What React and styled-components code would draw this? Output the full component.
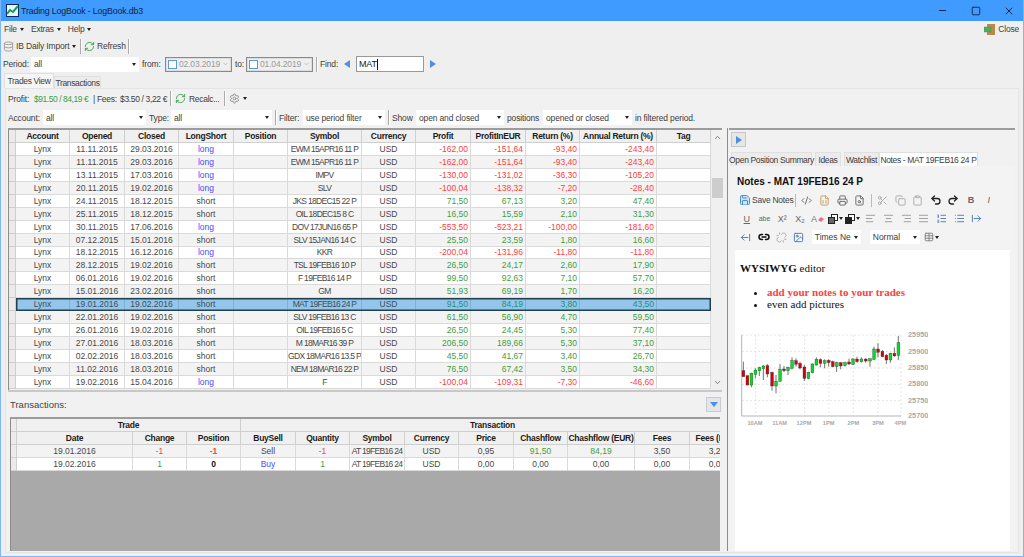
import React from "react";
import styled, { createGlobalStyle } from "styled-components";
import {
  Database, RefreshCw, Settings, Save, CodeXml, FileSpreadsheet, Printer, FileSearch, Scissors, Copy,
  Clipboard, Undo2, Redo2, AlignLeft, AlignCenter, AlignRight, AlignJustify, ListOrdered, List,
  Link2, Unlink, Image, Table, ChevronDown, ChevronUp, Minus, Square, X, ArrowRightFromLine, ArrowLeftFromLine,
} from "lucide-react";

const TRADE_COLS = "7px 54px 55px 54px 55px 54px 74px 54px 55px 55px 54px 77px 54px";
const TX_COLS = "6px 116px 54px 54px 55px 54px 55px 54px 55px 54px 67px 55px 55px";

const RED = "#ff4040";
const GREEN = "#3e9e3e";
const BLUE = "#4a4aff";

const trades = [
  ["11.11.2015", "29.03.2016", "long", "EWM 15APR16 11 P", "-162,00", "-151,64", "-93,40", "-243,40"],
  ["11.11.2015", "29.03.2016", "long", "EWM 15APR16 11 P", "-162,00", "-151,64", "-93,40", "-243,40"],
  ["13.11.2015", "17.03.2016", "long", "IMPV", "-130,00", "-131,02", "-36,30", "-105,20"],
  ["20.11.2015", "19.02.2016", "long", "SLV", "-100,04", "-138,32", "-7,20", "-28,40"],
  ["24.11.2015", "18.12.2015", "short", "JKS 18DEC15 22 P", "71,50", "67,13", "3,20", "47,40"],
  ["25.11.2015", "18.12.2015", "short", "OIL 18DEC15 8 C", "16,50", "15,59", "2,10", "31,30"],
  ["30.11.2015", "17.06.2016", "long", "DOV 17JUN16 65 P", "-553,50", "-523,21", "-100,00", "-181,60"],
  ["07.12.2015", "15.01.2016", "short", "SLV 15JAN16 14 C", "25,50", "23,59", "1,80", "16,60"],
  ["18.12.2015", "16.12.2016", "long", "KKR", "-200,04", "-131,96", "-11,80", "-11,80"],
  ["28.12.2015", "19.02.2016", "short", "TSL 19FEB16 10 P", "26,50", "24,17", "2,60", "17,90"],
  ["06.01.2016", "19.02.2016", "short", "F 19FEB16 14 P", "99,50", "92,63", "7,10", "57,70"],
  ["15.01.2016", "23.02.2016", "short", "GM", "51,93", "69,19", "1,70", "16,20"],
  ["19.01.2016", "19.02.2016", "short", "MAT 19FEB16 24 P", "91,50", "84,19", "3,80", "43,50"],
  ["22.01.2016", "19.02.2016", "short", "SLV 19FEB16 13 C", "61,50", "56,90", "4,70", "59,50"],
  ["26.01.2016", "19.02.2016", "short", "OIL 19FEB16 5 C", "26,50", "24,45", "5,30", "77,40"],
  ["27.01.2016", "18.03.2016", "short", "M 18MAR16 39 P", "206,50", "189,66", "5,30", "37,10"],
  ["02.02.2016", "18.03.2016", "short", "GDX 18MAR16 13.5 P", "45,50", "41,67", "3,40", "26,70"],
  ["11.02.2016", "18.03.2016", "short", "NEM 18MAR16 22 P", "76,50", "67,42", "3,50", "34,30"],
  ["19.02.2016", "15.04.2016", "long", "F", "-100,04", "-109,31", "-7,30", "-46,60"],
];

// x, bodyTop, bodyBottom, wickTop, wickBottom, up
const candles = [
  [40, 362, 380, 335, 380, 0], [52, 377, 405, 377, 406, 0], [64, 370, 405, 368, 412, 1], [76, 360, 373, 355, 385, 1],
  [88, 353, 362, 350, 378, 1], [100, 348, 356, 345, 390, 1], [112, 347, 372, 342, 382, 0], [126, 367, 408, 365, 422, 0],
  [138, 394, 408, 375, 430, 1], [150, 358, 394, 343, 395, 1], [162, 357, 362, 348, 366, 0], [174, 352, 362, 350, 375, 1],
  [186, 332, 355, 322, 358, 1], [198, 332, 343, 325, 350, 0], [210, 340, 354, 335, 358, 0], [223, 351, 385, 345, 393, 0],
  [235, 367, 385, 365, 388, 1], [247, 342, 368, 340, 370, 1], [259, 328, 345, 322, 347, 1], [271, 329, 340, 325, 352, 0],
  [284, 332, 340, 328, 355, 1], [296, 331, 338, 328, 350, 0], [308, 335, 350, 332, 352, 0], [320, 338, 350, 335, 366, 1],
  [332, 338, 348, 336, 358, 0], [345, 338, 347, 335, 350, 1], [357, 336, 342, 326, 345, 0], [369, 327, 343, 324, 345, 1],
  [381, 327, 335, 320, 338, 0], [394, 327, 335, 322, 338, 1], [407, 327, 333, 325, 338, 0], [420, 326, 333, 325, 350, 1],
  [432, 297, 328, 290, 330, 1], [444, 297, 307, 280, 322, 0], [457, 304, 320, 300, 322, 0], [469, 316, 330, 312, 342, 0],
  [481, 310, 330, 308, 338, 1], [493, 310, 318, 292, 320, 0], [505, 278, 316, 258, 330, 1],
];

const GlobalStyle = createGlobalStyle`
  html, body { margin: 0; padding: 0; background: #efefef; }
  body { font-family: "Liberation Sans", Arial, sans-serif; font-size: 8.5px; color: #404040; }
  * { box-sizing: border-box; }
`;

const Win = styled.div`
  width: 1024px;
  height: 557px;
  display: flex;
  flex-direction: column;
  background: #efefef;
  border: 1px solid #7db8f8;
  border-top: 0;
  overflow: hidden;
`;

const TitleBar = styled.div`
  height: 21px;
  margin: 0 -1px;
  flex: none;
  background: #3f9bff;
  color: #10243c;
  font-size: 8.8px;
  letter-spacing: -0.15px;
  display: flex;
  align-items: center;
  padding-left: 6px;
  gap: 2px;
`;

const TitleText = styled.span`
  flex: 1;
`;

const WinButton = styled.div`
  width: 31px;
  height: 21px;
  display: flex;
  align-items: center;
  justify-content: center;
  color: #0c2138;
`;

const MenuBar = styled.div`
  height: 16px;
  flex: none;
  display: flex;
  align-items: center;
  padding: 0 3px;
  gap: 7px;
  letter-spacing: -0.2px;
`;

const MenuItem = styled.span`
  display: flex;
  align-items: center;
  gap: 3px;
`;

const Caret = styled.span`
  width: 0;
  height: 0;
  flex: none;
  margin: ${(p) => p.$margin || 0};
  border-left: 2.5px solid transparent;
  border-right: 2.5px solid transparent;
  border-top: 3px solid #222;
`;

const CloseButton = styled.span`
  margin-left: auto;
  display: flex;
  align-items: center;
  gap: 2px;
  padding-right: 1px;
`;

const ToolRow = styled.div`
  height: ${(p) => p.$h || 18}px;
  flex: none;
  display: flex;
  align-items: center;
  gap: ${(p) => p.$gap || 3}px;
  padding-left: ${(p) => p.$pad ?? 2}px;
  letter-spacing: -0.15px;
`;

const Label = styled.span`
  width: ${(p) => p.$w}px;
  flex: none;
  margin-left: ${(p) => p.$ml || 0}px;
  color: ${(p) => p.$color || "inherit"};
  letter-spacing: ${(p) => p.$track ?? -0.15}px;
  white-space: nowrap;
`;

const ToolSep = styled.div`
  width: 1px;
  height: 15px;
  flex: none;
  margin: ${(p) => p.$margin || "0 2px"};
  background: #aaa;
  box-shadow: 1px 0 0 #fff;
`;

const Select = styled.div`
  width: ${(p) => p.$w}px;
  height: 15px;
  flex: none;
  background: #fff;
  display: flex;
  align-items: center;
  justify-content: space-between;
  padding: 0 3px 0 3px;
`;

const DateField = styled.div`
  width: 67px;
  height: 15px;
  flex: none;
  border: 1px solid #8a8a8a;
  box-shadow: inset 0 0 0 1px #ddd;
  display: flex;
  align-items: center;
  background: #efefef;
  color: #9a9a9a;
  padding: 0 2px;
  gap: 2px;
`;

const CheckBox = styled.span`
  width: 9px;
  height: 9px;
  flex: none;
  border: 1px solid #5a9ad8;
  background: #fff;
`;

const DateText = styled.span`
  flex: 1;
`;

const FindInput = styled.div`
  width: 68px;
  height: 16px;
  flex: none;
  border: 1px solid #999;
  background: #fff;
  font-size: 9px;
  color: #222;
  display: flex;
  align-items: center;
  padding-left: 2px;
`;

const TextCursor = styled.span`
  width: 1px;
  height: 11px;
  background: #111;
`;

const Arrow = styled.span`
  width: 0;
  height: 0;
  flex: none;
  margin: ${(p) => p.$margin || 0};
  border-top: 4px solid transparent;
  border-bottom: 4px solid transparent;
  ${(p) => (p.$left ? "border-right" : "border-left")}: 6px solid #4f8fdc;
`;

const Tabs = styled.div`
  height: ${(p) => p.$h}px;
  flex: none;
  display: flex;
  align-items: flex-end;
  padding-left: ${(p) => p.$pad}px;
  gap: ${(p) => p.$gap || 0}px;
`;

const Tab = styled.div`
  width: ${(p) => p.$w}px;
  height: ${(p) => p.$tall || (p.$active ? 15 : 12)}px;
  flex: none;
  margin-left: ${(p) => p.$ml || 0}px;
  display: flex;
  align-items: center;
  justify-content: center;
  white-space: nowrap;
  letter-spacing: -0.35px;
  background: ${(p) => (p.$active ? p.$activeBg || "#f5f5f5" : "#ececec")};
  border: 1px solid #e0e0e0;
  border-bottom: 0;
`;

const Panel = styled.div`
  flex: 1;
  min-height: 0;
  margin: 0 4px 3px 4px;
  background: #f1f1f1;
  border: 1px solid #e4e4e4;
  display: flex;
  flex-direction: column;
`;

const Split = styled.div`
  flex: 1;
  min-height: 0;
  display: flex;
  padding: 1px 0 1px 2px;
`;

const LeftCol = styled.div`
  width: 714px;
  flex: none;
  display: flex;
  flex-direction: column;
`;

const TableBox = styled.div`
  height: 262px;
  flex: none;
  border-top: 2px solid #9c9c9c;
  border-left: 1px solid #8c8c8c;
  display: flex;
  background: #efefef;
`;

const TableBody = styled.div`
  width: 702px;
  flex: none;
`;

const Row = styled.div`
  display: grid;
  grid-template-columns: ${(p) => p.$cols};
  height: ${(p) => p.$h || 13}px;
  position: relative;
  background: ${(p) => (p.$alt ? "#f3f3f3" : "#fff")};
`;

const SelectedRow = styled(Row)`
  background: #94c5ea;
  &::after {
    content: "";
    position: absolute;
    inset: 0 0 0 7px;
    border: 1px solid #23404f;
    box-shadow: inset 0 0 0 0.5px #23404f;
  }
`;

const Cell = styled.div`
  display: flex;
  align-items: center;
  justify-content: ${(p) => (p.$right ? "flex-end" : "center")};
  padding-right: ${(p) => (p.$right ? 2 : 0)}px;
  border-right: 1px solid ${(p) => (p.$sel ? "#7fb0d6" : "#dadada")};
  border-bottom: 1px solid ${(p) => (p.$sel ? "#7fb0d6" : "#dadada")};
  color: ${(p) => p.$color || (p.$sel ? "#3a5060" : "#484848")};
  font-weight: ${(p) => (p.$bold ? 700 : 400)};
  letter-spacing: ${(p) => (p.$tight ? -0.7 : 0)}px;
  white-space: nowrap;
  overflow: hidden;
`;

const HeadCell = styled.div`
  display: flex;
  align-items: center;
  justify-content: center;
  background: #f0f0f0;
  border-right: 1px solid #cfcfcf;
  border-bottom: 1px solid #cfcfcf;
  font-weight: 700;
  color: #1c1c1c;
  letter-spacing: -0.25px;
  white-space: nowrap;
  overflow: hidden;
`;

const RowHead = styled.div`
  background: #ebebeb;
  border-right: 1px solid #cfcfcf;
  border-bottom: 1px solid #cfcfcf;
`;

const ScrollBar = styled.div`
  width: 11px;
  flex: none;
  margin-left: 1px;
  background: #f0f0f0;
  display: flex;
  flex-direction: column;
  align-items: center;
  justify-content: space-between;
  position: relative;
  padding: 3px 0;
  color: #555;
`;

const ScrollThumb = styled.div`
  position: absolute;
  top: 48px;
  left: 0;
  width: 100%;
  height: 20px;
  background: #cdcdcd;
`;

const TxHeader = styled.div`
  height: 27px;
  flex: none;
  display: flex;
  align-items: center;
  justify-content: space-between;
  border-top: 2px solid #c8c8c8;
  font-size: 9.5px;
  color: #444;
  padding: 0 1px 0 2px;
`;

const FilterButton = styled.div`
  width: 15px;
  height: 15px;
  background: #e2e6ea;
  border: 1px solid #c8ccd0;
  display: flex;
  align-items: center;
  justify-content: center;
`;

const FilterTriangle = styled.span`
  width: 0;
  height: 0;
  border-left: 4.5px solid transparent;
  border-right: 4.5px solid transparent;
  border-top: 5px solid #4f8fdc;
`;

const TxBox = styled.div`
  flex: 1;
  min-height: 0;
  margin: 0 2px 0 2px;
  background: #a9a9a9;
  border-top: 2px solid #9c9c9c;
  border-left: 1px solid #8c8c8c;
  overflow: hidden;
`;

const GroupRow = styled.div`
  display: grid;
  grid-template-columns: 6px 224px 504px;
  height: 13px;
`;

const TxInner = styled.div`
  width: 740px;
`;

const RightCol = styled.div`
  flex: 1;
  min-width: 0;
  margin-left: 5px;
  padding-left: 1px;
  border-left: 1px solid #8c8c8c;
  display: flex;
  flex-direction: column;
`;

const RightPane = styled.div`
  flex: 1;
  min-height: 0;
  margin-right: 3px;
  border-top: 2px solid #9c9c9c;
  display: flex;
  flex-direction: column;
`;

const PaneButton = styled.div`
  width: 15px;
  height: 15px;
  flex: none;
  margin: 2px 0 0 2px;
  background: #e6e6e6;
  border: 1px solid #c8c8c8;
  display: flex;
  align-items: center;
  justify-content: center;
`;

const NotesBody = styled.div`
  flex: 1;
  min-height: 0;
  background: #f3f3f3;
  margin-left: 1px;
  padding: 0 5px;
  display: flex;
  flex-direction: column;
`;

const NotesTitle = styled.div`
  height: 25px;
  flex: none;
  display: flex;
  align-items: center;
  padding: 6px 0 0 2px;
  font-size: 10px;
  font-weight: 700;
  color: #111;
  white-space: nowrap;
`;

const EditorRow = styled.div`
  height: 18.5px;
  flex: none;
  display: flex;
  align-items: center;
  padding-left: ${(p) => p.$pad || 0}px;
`;

const EditorIcon = styled.div`
  width: ${(p) => p.$w || 17.7}px;
  height: 14px;
  flex: none;
  display: flex;
  align-items: center;
  justify-content: center;
  gap: 1px;
  color: ${(p) => p.$color || "#666"};
  font-size: ${(p) => p.$size || 9}px;
  font-weight: ${(p) => (p.$bold ? 700 : 400)};
  font-style: ${(p) => (p.$italic ? "italic" : "normal")};
  text-decoration: ${(p) => (p.$under ? "underline" : "none")};
  white-space: nowrap;
`;

const SaveLabel = styled.span`
  width: 41px;
  flex: none;
  color: #444;
  margin-left: 1px;
  letter-spacing: -0.25px;
  white-space: nowrap;
`;

const EditorSep = styled.div`
  width: 1px;
  height: 13px;
  flex: none;
  margin: 0 2px;
  background: #bbb;
`;

const EditorSelect = styled(Select)`
  height: 14px;
  margin: ${(p) => p.$margin || 0};
`;

const Editor = styled.div`
  flex: 1;
  min-height: 0;
  margin-top: 3px;
  background: #fff;
  color: #111;
  font-family: "Liberation Serif", "Times New Roman", serif;
  font-size: 11px;
  padding: 12px 5px 0;
  overflow: hidden;
`;

const EditorLine = styled.p`
  margin: 0;
  line-height: 13px;
`;

const Bullets = styled.ul`
  margin: 11px 0 0;
  padding-left: 27px;
  line-height: 12.5px;
`;

const RedNote = styled.li`
  color: ${RED};
  font-weight: 700;
  &::marker {
    color: #111;
  }
`;

const ChartSvg = styled.svg`
  display: block;
  margin: 21px 0 0 -2px;
`;

function TradeRow({ t, index }) {
  const sel = index === 12;
  const RowKind = sel ? SelectedRow : Row;
  const negative = t[4].startsWith("-");
  const money = sel ? "#1f8f7e" : negative ? RED : GREEN;
  const side = t[2] === "long" ? BLUE : undefined;
  return (
    <RowKind $cols={TRADE_COLS} $alt={index % 2 === 1} $h={12.95}>
      <RowHead />
      <Cell $sel={sel}>Lynx</Cell>
      <Cell $sel={sel}>{t[0]}</Cell>
      <Cell $sel={sel}>{t[1]}</Cell>
      <Cell $sel={sel} $color={side}>{t[2]}</Cell>
      <Cell $sel={sel} />
      <Cell $sel={sel} $tight>{t[3]}</Cell>
      <Cell $sel={sel}>USD</Cell>
      <Cell $sel={sel} $right $color={money}>{t[4]}</Cell>
      <Cell $sel={sel} $right $color={money}>{t[5]}</Cell>
      <Cell $sel={sel} $right $color={money}>{t[6]}</Cell>
      <Cell $sel={sel} $right $color={money}>{t[7]}</Cell>
      <Cell $sel={sel} />
    </RowKind>
  );
}

function CandleChart() {
  const grid = [255, 304, 354, 403, 452];
  const vgrid = [77, 150, 224, 297, 370, 444, 513];
  const prices = [["25950", 255], ["25900", 304], ["25850", 353], ["25800", 402], ["25750", 451], ["25700", 498]];
  const hours = [["10AM", 75], ["11AM", 149], ["12PM", 222], ["1PM", 296], ["2PM", 370], ["3PM", 444], ["4PM", 511]];
  return (
    <ChartSvg width="190" height="100" viewBox="24 246 570 300">
      {grid.map((y) => (
        <line key={y} x1="36" x2="513" y1={y} y2={y} stroke="#d8d8d8" strokeWidth="2" strokeDasharray="6 6" />
      ))}
      {vgrid.map((x) => (
        <line key={x} x1={x} x2={x} y1="255" y2="497" stroke="#d8d8d8" strokeWidth="2" strokeDasharray="6 6" />
      ))}
      <path d="M35 255V498H513" fill="none" stroke="#b5b5b5" strokeWidth="3" />
      {candles.map(([x, top, bottom, wt, wb, up]) => (
        <g key={x}>
          <line x1={x} x2={x} y1={wt} y2={wb} stroke="#555" strokeWidth="2.5" />
          <rect x={x - 4} y={top} width="8.5" height={bottom - top} fill={up ? "#00e020" : "#d80010"} stroke="#333" strokeWidth="1" />
        </g>
      ))}
      {prices.map(([p, y]) => (
        <text key={p} x="534" y={y + 7} fontSize="22" fill="#a8a8a8" fontFamily="Liberation Sans" fontWeight="700">{p}</text>
      ))}
      {hours.map(([h, x]) => (
        <text key={h} x={x} y="524" fontSize="17" fill="#a8a8a8" textAnchor="middle" fontFamily="Liberation Sans" fontWeight="700">{h}</text>
      ))}
    </ChartSvg>
  );
}

function AppLogo() {
  return (
    <svg width="13" height="13" viewBox="0 0 13 13">
      <rect width="13" height="13" fill="#0a2a5a" />
      <rect x="1" y="1" width="11" height="11" fill="#e8f4ff" />
      <path d="M1 10L4 6l3 2 5-6" fill="none" stroke="#12a050" strokeWidth="2" />
    </svg>
  );
}

function DoorIcon() {
  return (
    <svg width="12" height="11" viewBox="0 0 12 11">
      <rect x="3" y="0" width="8" height="11" fill="#b98a4c" />
      <rect x="0" y="3" width="7" height="5" fill="#4caf50" stroke="#777" strokeWidth="0.5" />
    </svg>
  );
}

// the two overlapping squares of the text and background colour buttons
function ColorSquares({ fill }) {
  return (
    <svg width="10" height="10" viewBox="0 0 10 10">
      <rect x="3.5" y="0.5" width="6" height="6" fill="#fff" stroke="#222" />
      <rect x="0.5" y="3.5" width="6" height="6" fill={fill} stroke="#222" />
    </svg>
  );
}

function EraserA() {
  return (
    <svg width="6" height="6" viewBox="0 0 6 6">
      <path d="M0 4L3 1l3 2-3 3z" fill="#f06a8a" />
    </svg>
  );
}

export default function App() {
  return (
    <>
      <GlobalStyle />
      <Win>
        <TitleBar>
          <AppLogo />
          <TitleText>Trading LogBook - LogBook.db3</TitleText>
          <WinButton><Minus size={11} /></WinButton>
          <WinButton><Square size={10} /></WinButton>
          <WinButton><X size={12} /></WinButton>
        </TitleBar>

        <MenuBar>
          <MenuItem>File <Caret /></MenuItem>
          <MenuItem>Extras <Caret /></MenuItem>
          <MenuItem>Help <Caret /></MenuItem>
          <CloseButton><DoorIcon />Close</CloseButton>
        </MenuBar>

        <ToolRow $gap={2}>
          <Database size={11} color="#9a9a9a" />
          <Label $w={53}>IB Daily Import</Label>
          <Caret $margin="0 0 0 1px" />
          <ToolSep $margin="0 1px 0 2px" />
          <RefreshCw size={11} color="#3f9f4f" />
          <Label $w={26}>Refresh</Label>
          <ToolSep $margin="0 0 0 3px" />
        </ToolRow>

        <ToolRow $gap={3}>
          <Label $w={25}>Period:</Label>
          <Select $w={108}>all<Caret /></Select>
          <Label $w={20}>from:</Label>
          <DateField><CheckBox /><DateText>02.03.2019</DateText><ChevronDown size={8} /></DateField>
          <Label $w={8}>to:</Label>
          <DateField><CheckBox /><DateText>01.04.2019</DateText><ChevronDown size={8} /></DateField>
          <ToolSep $margin="0" />
          <Label $w={17}>Find:</Label>
          <Arrow $left $margin="0 3px 0 4px" />
          <FindInput>MAT<TextCursor /></FindInput>
          <Arrow $margin="0 0 0 3px" />
        </ToolRow>

        <Tabs $h={15} $pad={3}>
          <Tab $w={50} $active>Trades View</Tab>
          <Tab $w={47}>Transactions</Tab>
        </Tabs>

        <Panel>
          <ToolRow $h={19} $pad={2}>
            <Label $w={21}>Profit:</Label>
            <Label $w={54} $ml={2} $color={GREEN} $track={-0.45}>$91.50 / 84,19 €</Label>
            <Label $w={22} $ml={2} $track={-0.3}>| Fees:</Label>
            <Label $w={46} $ml={2} $track={-0.35}>$3.50 / 3,22 €</Label>
            <ToolSep $margin="0 1px" />
            <RefreshCw size={11} color="#3f9f4f" />
            <Label $w={30} $track={-0.3}>Recalc...</Label>
            <ToolSep $margin="0 1px 0 2px" />
            <Settings size={11} color="#8a8a8a" />
            <Caret />
          </ToolRow>
          <ToolRow $h={19} $pad={2}>
            <Label $w={32}>Account:</Label>
            <Select $w={103}>all<Caret /></Select>
            <Label $w={19}>Type:</Label>
            <Select $w={101}>all<Caret /></Select>
            <ToolSep $margin="0" />
            <Label $w={21}>Filter:</Label>
            <Select $w={82}>use period filter<Caret /></Select>
            <ToolSep $margin="0" />
            <Label $w={21}>Show</Label>
            <Select $w={88}>open and closed<Caret /></Select>
            <Label $w={33}>positions</Label>
            <Select $w={89}>opened or closed<Caret /></Select>
            <span>in filtered period.</span>
          </ToolRow>

          <Split>
            <LeftCol>
              <TableBox>
                <TableBody>
                  <Row $cols={TRADE_COLS}>
                    <RowHead />
                    {["Account", "Opened", "Closed", "LongShort", "Position", "Symbol", "Currency", "Profit", "ProfitInEUR", "Return (%)", "Annual Return (%)", "Tag"].map((h) => (
                      <HeadCell key={h}>{h}</HeadCell>
                    ))}
                  </Row>
                  {trades.map((t, i) => <TradeRow key={i} t={t} index={i} />)}
                </TableBody>
                <ScrollBar>
                  <ChevronUp size={9} />
                  <ScrollThumb />
                  <ChevronDown size={9} />
                </ScrollBar>
              </TableBox>

              <TxHeader>
                <span>Transactions:</span>
                <FilterButton><FilterTriangle /></FilterButton>
              </TxHeader>

              <TxBox>
                <TxInner>
                  <GroupRow>
                    <RowHead />
                    <HeadCell>Trade</HeadCell>
                    <HeadCell>Transaction</HeadCell>
                  </GroupRow>
                  <Row $cols={TX_COLS}>
                    <RowHead />
                    {["Date", "Change", "Position", "BuySell", "Quantity", "Symbol", "Currency", "Price", "Chashflow", "Chashflow (EUR)", "Fees", "Fees (EUR)"].map((h) => (
                      <HeadCell key={h}>{h}</HeadCell>
                    ))}
                  </Row>
                  <Row $cols={TX_COLS} $alt>
                    <RowHead />
                    <Cell>19.01.2016</Cell>
                    <Cell $color={RED}>-1</Cell>
                    <Cell $color={RED} $bold>-1</Cell>
                    <Cell>Sell</Cell>
                    <Cell $color={RED}>-1</Cell>
                    <Cell $tight>AT 19FEB16 24</Cell>
                    <Cell>USD</Cell>
                    <Cell>0,95</Cell>
                    <Cell $color={GREEN}>91,50</Cell>
                    <Cell $color={GREEN}>84,19</Cell>
                    <Cell>3,50</Cell>
                    <Cell>3,22</Cell>
                  </Row>
                  <Row $cols={TX_COLS}>
                    <RowHead />
                    <Cell>19.02.2016</Cell>
                    <Cell $color={GREEN}>1</Cell>
                    <Cell $color="#111" $bold>0</Cell>
                    <Cell $color={BLUE}>Buy</Cell>
                    <Cell $color={GREEN}>1</Cell>
                    <Cell $tight>AT 19FEB16 24</Cell>
                    <Cell>USD</Cell>
                    <Cell>0,00</Cell>
                    <Cell>0,00</Cell>
                    <Cell>0,00</Cell>
                    <Cell>0,00</Cell>
                    <Cell>0,00</Cell>
                  </Row>
                </TxInner>
              </TxBox>
            </LeftCol>

            <RightCol>
              <RightPane>
                <PaneButton><Arrow /></PaneButton>
                <Tabs $h={19} $pad={2} $gap={3}>
                  <Tab $w={81} $tall={14}>Open Position Summary</Tab>
                  <Tab $w={26} $tall={14}>Ideas</Tab>
                  <Tab $w={35} $tall={14}>Watchlist</Tab>
                  <Tab $w={99} $tall={14} $ml={-3} $active $activeBg="#fff">Notes - MAT 19FEB16 24 P</Tab>
                </Tabs>
                <NotesBody>
                  <NotesTitle>Notes - MAT 19FEB16 24 P</NotesTitle>
                  <EditorRow $pad={4}>
                    <Save size={12} color="#4a8fd0" fill="#cfe3f7" />
                    <SaveLabel>Save Notes</SaveLabel>
                    <EditorSep />
                    <EditorIcon><CodeXml size={11} /></EditorIcon>
                    <EditorIcon><FileSpreadsheet size={11} color="#c99a5a" /></EditorIcon>
                    <EditorIcon><Printer size={11} /></EditorIcon>
                    <EditorIcon><FileSearch size={11} /></EditorIcon>
                    <EditorSep />
                    <EditorIcon $color="#aaa"><Scissors size={11} /></EditorIcon>
                    <EditorIcon $color="#aaa"><Copy size={11} /></EditorIcon>
                    <EditorIcon $color="#aaa"><Clipboard size={11} /></EditorIcon>
                    <EditorIcon $color="#222"><Undo2 size={12} strokeWidth={2.6} /></EditorIcon>
                    <EditorIcon $color="#222"><Redo2 size={12} strokeWidth={2.6} /></EditorIcon>
                    <EditorIcon $bold>B</EditorIcon>
                    <EditorIcon $italic>I</EditorIcon>
                  </EditorRow>
                  <EditorRow $pad={3}>
                    <EditorIcon $under>U</EditorIcon>
                    <EditorIcon $size={7}>abe</EditorIcon>
                    <EditorIcon>X²</EditorIcon>
                    <EditorIcon>X₂</EditorIcon>
                    <EditorIcon $color="#777">A<EraserA /></EditorIcon>
                    <EditorIcon><ColorSquares fill="#666" /><Caret /></EditorIcon>
                    <EditorIcon><ColorSquares fill="#222" /><Caret /></EditorIcon>
                    <EditorIcon $color="#999"><AlignLeft size={11} /></EditorIcon>
                    <EditorIcon $color="#999"><AlignCenter size={11} /></EditorIcon>
                    <EditorIcon $color="#999"><AlignRight size={11} /></EditorIcon>
                    <EditorIcon $color="#999"><AlignJustify size={11} /></EditorIcon>
                    <EditorIcon $color="#4a78b0"><ListOrdered size={11} /></EditorIcon>
                    <EditorIcon $color="#4a78b0"><List size={11} /></EditorIcon>
                    <EditorIcon $color="#4a78b0"><ArrowRightFromLine size={11} /></EditorIcon>
                  </EditorRow>
                  <EditorRow $pad={2}>
                    <EditorIcon $color="#4a78b0"><ArrowLeftFromLine size={11} /></EditorIcon>
                    <EditorIcon $color="#111"><Link2 size={12} strokeWidth={3} /></EditorIcon>
                    <EditorIcon $color="#aaa"><Unlink size={11} /></EditorIcon>
                    <EditorIcon $color="#4a78b0"><Image size={11} /></EditorIcon>
                    <EditorSelect $w={49} $margin="0 0 0 4px">Times Ne<Caret /></EditorSelect>
                    <EditorSelect $w={50} $margin="0 0 0 9px">Normal<Caret /></EditorSelect>
                    <EditorIcon $w={24} $color="#777"><Table size={10} /><Caret /></EditorIcon>
                  </EditorRow>
                  <Editor>
                    <EditorLine><b>WYSIWYG</b> editor</EditorLine>
                    <Bullets>
                      <RedNote>add your notes to your trades</RedNote>
                      <li>even add pictures</li>
                    </Bullets>
                    <CandleChart />
                  </Editor>
                </NotesBody>
              </RightPane>
            </RightCol>
          </Split>
        </Panel>
      </Win>
    </>
  );
}
